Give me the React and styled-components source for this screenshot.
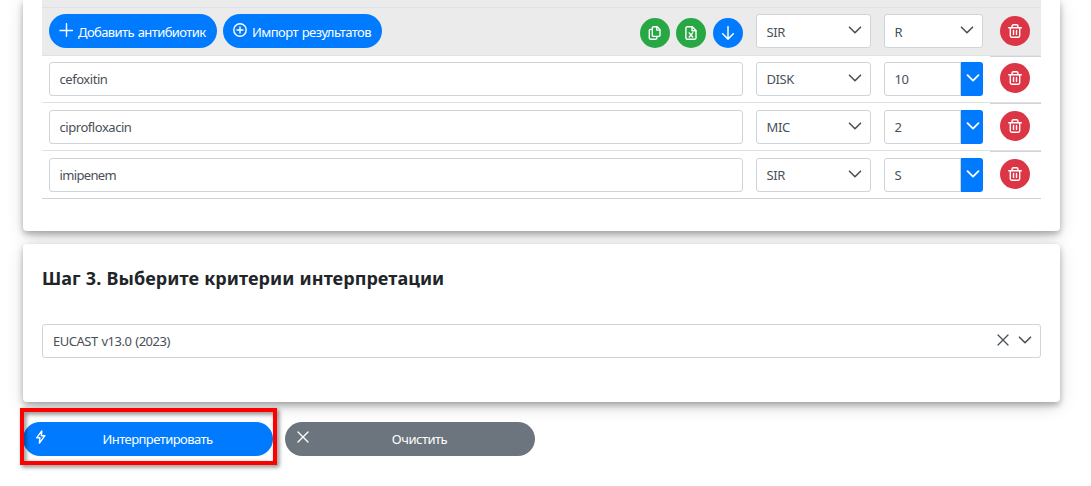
import React from "react";
import styled, { createGlobalStyle } from "styled-components";

const Global = createGlobalStyle`
  *{box-sizing:border-box}
  body{margin:0;background:#fff;color:#212529;font-family:"Segoe UI","Noto Sans","Open Sans",sans-serif;font-size:13px;overflow:hidden}
  button{font:inherit;border:0;padding:0;color:#fff}
`;

const Page = styled.main`
  width: 1091px;
  height: 486px;
  padding: 0 31px 0 23px;
`;
const Card = styled.section`
  height: ${(p) => p.$h}px;
  padding: 0 19px;
  background: #fff;
  border-radius: ${(p) => (p.$first ? "0 0 4px 4px" : "4px")};
  box-shadow: 0 11px 15px -7px rgba(0, 0, 0, 0.06), 0 3px 6px rgba(0, 0, 0, 0.28), 0 4px 18px rgba(0, 0, 0, 0.13);
  margin-bottom: ${(p) => p.$gap}px;
`;
const HeadStrip = styled.div`
  height: 8px;
  background: #ebebeb;
  border-bottom: 1px solid #dee2e6;
`;
const Row = styled.div`
  display: grid;
  grid-template-columns: 701px 128px 119px 51px;
  height: ${(p) => p.$h}px;
  background: ${(p) => (p.$head ? "#ebebeb" : "#fff")};
  border-bottom: 1px solid ${(p) => (p.$last ? "#ced4da" : "#dee2e6")};
`;
const Cell = styled.div`
  padding: ${(p) => p.$top}px 0 0 ${(p) => p.$left}px;
`;
const ActionCell = styled.div`
  padding: ${(p) => p.$top}px 0 0 10px;
  border-top: ${(p) => (p.$line ? "1px solid #ced4da" : "0")};
`;
const Toolbar = styled.div`
  display: flex;
  align-items: flex-end;
  gap: 6px;
  height: 34px;
`;
const Spacer = styled.div`
  flex: 1;
`;
const Label = styled.span`
  white-space: nowrap;
  letter-spacing: ${(p) => p.$ls || 0}px;
  word-spacing: ${(p) => p.$ws || 0}px;
`;
const Pill = styled.button`
  display: flex;
  align-items: center;
  width: ${(p) => p.$w}px;
  height: 34px;
  padding-left: 10px;
  border-radius: 17px;
  background: #007bff;
  svg { margin: -3px 5px 0 0; }
  ${Label} { padding-top: 2px; }
`;
const Round = styled.button`
  display: flex;
  align-items: center;
  justify-content: center;
  width: 30px;
  height: 30px;
  border-radius: 50%;
  background: ${(p) => p.$bg};
  svg { margin-top: ${(p) => p.$lift || 0}px; }
`;
const Exports = styled.div`
  display: flex;
  gap: 6px;
  margin-right: 1px;
`;
const Field = styled.div`
  display: flex;
  align-items: center;
  justify-content: space-between;
  width: ${(p) => p.$w}px;
  height: 34px;
  padding: 0 8px 0 ${(p) => p.$pad || 9.5}px;
  color: #495057;
  background: #fff;
  border: 1px solid #ced4da;
  border-radius: ${(p) => (p.$joined ? "3px 0 0 3px" : "3px")};
  ${Label} { padding: ${(p) => (p.$low ? "1px 0 0" : "0 0 1px")}; }
  svg { margin-top: -3px; }
`;
const Combo = styled.div`
  display: flex;
`;
const DropButton = styled.button`
  display: flex;
  align-items: center;
  justify-content: center;
  width: 22px;
  height: 34px;
  border-radius: 0 3px 3px 0;
  background: #007bff;
  svg { margin: -2px 0 0 1px; }
`;
const Title = styled.h2`
  margin: 0;
  padding: 21px 0 0 0;
  height: 80px;
  font-size: 18px;
  line-height: 26px;
  font-weight: 700;
`;
const FieldIcons = styled.span`
  display: flex;
  gap: 8px;
`;
const Footer = styled.div`
  display: flex;
  gap: 12px;
`;
const WidePill = styled.button`
  display: grid;
  grid-template-columns: 16px 1fr;
  align-items: center;
  width: 250px;
  height: 34px;
  padding: 0 10px;
  border-radius: 17px;
  background: ${(p) => p.$bg};
  svg { margin: -4px 0 0 0.5px; }
  ${Label} { padding: 0 0 1px 3px; text-align: center; }
`;
const Marked = styled.div`
  position: relative;
  width: 250px;
`;
const Marker = styled.div`
  position: absolute;
  left: -3px;
  top: -14px;
  width: 257px;
  height: 57px;
  border: 4px solid #f00;
  filter: drop-shadow(2px 2px 2px rgba(0, 0, 0, 0.5));
`;

const shapes = {
  plus: <path d="M7.5 .7v12.6M1 7.5h12.6" />,
  circlePlus: <><circle cx="7" cy="7" r="6.2" /><path d="M7 4v6M4 7h6" /></>,
  copy: <><path d="M5.4 .8h3.8L12 3.7v5.6a1.1 1.1 0 0 1-1.1 1.1H5.4a1.1 1.1 0 0 1-1.1-1.1V1.9A1.1 1.1 0 0 1 5.4 .8z" /><path d="M8.7 1v3.1h3.1M3.9 3.4H2.4a1.1 1.1 0 0 0-1.1 1.1v7.6a1.1 1.1 0 0 0 1.1 1.1h5.4a1.1 1.1 0 0 0 1.1-1.1v-1.3" /></>,
  excel: <><path d="M3 .8h5.3l3.7 3.7v7.6a1.1 1.1 0 0 1-1.1 1.1H3a1.1 1.1 0 0 1-1.1-1.1V1.9A1.1 1.1 0 0 1 3 .8z" /><path d="M8 .9v3.8h3.8M5.2 6.9l3.5 4.1M8.7 6.9L5.2 11" /></>,
  down: <path d="M7 .7v12.2M1.7 7.8l5.3 5.3 5.3-5.3" />,
  chevron: <path d="M1.5 4.2L7 9.7l5.5-5.5" />,
  trash: <><path d="M.7 3.7h12.6M4.1 3.5V1.9A1.1 1.1 0 0 1 5.2 .8h3.6a1.1 1.1 0 0 1 1.1 1.1v1.6M2.3 4v7.8a1.4 1.4 0 0 0 1.4 1.4h6.6a1.4 1.4 0 0 0 1.4-1.4V4" /><path d="M5.5 6.4v4M8.5 6.4v4" /></>,
  times: <path d="M2 2l10 10M12 2L2 12" />,
  bolt: <path d="M7.8.9L2.7 7.8h3.2L5.4 13.1l5.5-7.4H7.4z" />,
};
const Icon = ({ name, size = 14, weight = 1.4 }) => (
  <svg width={size} height={size} viewBox="0 0 14 14" fill="none" stroke="currentColor" strokeWidth={weight} strokeLinecap="round" strokeLinejoin="round">
    {shapes[name]}
  </svg>
);

const Select = ({ w, low, children }) => (
  <Field $w={w} $low={low}><Label $ls={-0.4}>{children}</Label><Icon name="chevron" weight={1.6} /></Field>
);

const rows = [
  { name: "cefoxitin", ls: -0.45, type: "DISK", value: "10", h: 47, top: 6, trash: 6 },
  { name: "ciprofloxacin", ls: -0.45, type: "MIC", value: "2", h: 48, top: 7, trash: 7 },
  { name: "imipenem", ls: -0.65, type: "SIR", value: "S", h: 48, top: 7, trash: 7 },
];

export default function App() {
  return (
    <Page>
      <Global />
      <Card $h={231} $gap={13} $first>
        <HeadStrip />
        <Row $head $h={48}>
          <Cell $top={6} $left={7}>
            <Toolbar>
              <Pill $w={168}><Icon name="plus" /><Label $ls={-0.6} $ws={1}>Добавить антибиотик</Label></Pill>
              <Pill $w={159}><Icon name="circlePlus" /><Label $ls={-0.55} $ws={1}>Импорт результатов</Label></Pill>
              <Spacer />
              <Exports>
                <Round $bg="#28a745"><Icon name="copy" /></Round>
                <Round $bg="#28a745"><Icon name="excel" /></Round>
              </Exports>
              <Round $bg="#007bff"><Icon name="down" weight={1.5} /></Round>
            </Toolbar>
          </Cell>
          <Cell $top={6} $left={13}><Select w={115} low>SIR</Select></Cell>
          <Cell $top={6} $left={13}><Select w={99} low>R</Select></Cell>
          <ActionCell $top={8}><Round $bg="#dc3545" $lift={-1}><Icon name="trash" /></Round></ActionCell>
        </Row>
        {rows.map((r, i) => (
          <Row key={r.name} $h={r.h} $last={i === 2}>
            <Cell $top={r.top} $left={7}><Field $w={694}><Label $ls={r.ls}>{r.name}</Label></Field></Cell>
            <Cell $top={r.top} $left={13}><Select w={115}>{r.type}</Select></Cell>
            <Cell $top={r.top} $left={13}>
              <Combo>
                <Field $w={77} $joined><Label $ls={-0.4}>{r.value}</Label></Field>
                <DropButton><Icon name="chevron" weight={1.8} /></DropButton>
              </Combo>
            </Cell>
            <ActionCell $top={r.trash} $line><Round $bg="#dc3545" $lift={-1}><Icon name="trash" /></Round></ActionCell>
          </Row>
        ))}
      </Card>
      <Card $h={158} $gap={20}>
        <Title><Label $ls={0.05} $ws={0.5}>Шаг 3. Выберите критерии интерпретации</Label></Title>
        <Field $w={999} $pad={10}>
          <Label $ls={-0.5} $ws={1}>EUCAST v13.0 (2023)</Label>
          <FieldIcons><Icon name="times" weight={1.3} /><Icon name="chevron" weight={1.6} /></FieldIcons>
        </Field>
      </Card>
      <Footer>
        <Marked>
          <WidePill $bg="#007bff"><Icon name="bolt" /><Label $ls={-0.55}>Интерпретировать</Label></WidePill>
          <Marker />
        </Marked>
        <WidePill $bg="#6c757d"><Icon name="times" /><Label $ls={-0.5}>Очистить</Label></WidePill>
      </Footer>
    </Page>
  );
}
